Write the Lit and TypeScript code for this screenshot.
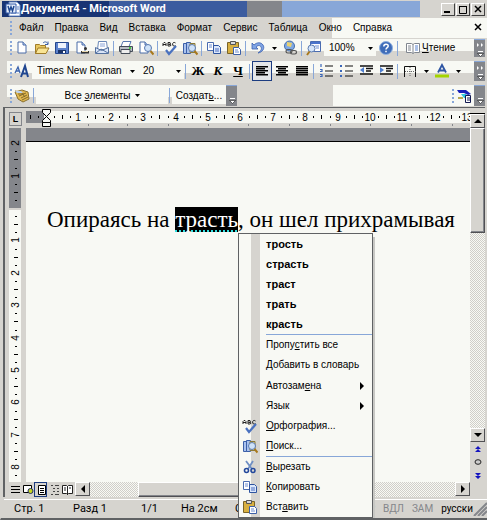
import { LitElement, html, svg, css, nothing } from "lit";
import { customElement } from "lit/decorators.js";
import { classMap } from "lit/directives/class-map.js";

/* 16x16 toolbar glyphs */
const sheet = (x: number, y: number) => svg`
  <path d=${`M${x} ${y}h5l3 3v8h-8z`} fill="#fff" stroke="#4a6ca8"/>
  <path d=${`M${x + 5} ${y}v3h3`} fill="#b8cdf0" stroke="#4a6ca8"/>`;
const lens = svg`<circle cx="10" cy="8" r="3.5" fill="#cfe2f8" stroke="#5a7ab0"/><path d="M12.5 11l3 3.500" stroke="#a8781c" stroke-width="2"/>`;
const spell = svg`
  <path d="M1 6V3.500l1-1h1l1 1V6M1 4.500h3M6 6V2.500h2l.5 1-.5.8H6.500h2l.5 1-1 .7H6M13.500 3l-.8-.5H11.500l-.8 1v1.500l.8 1h1.200l.8-.5" fill="none" stroke="#222"/>
  <path d="M4 10l3 4 7-8" fill="none" stroke="#4a72c0" stroke-width="2.200"/>`;
const research = svg`
  <path d="M1.500 3.500h3v10h-3zM4.500 2.500h4v11h-4z" fill="#a9c2ee" stroke="#3c60a8"/>
  <path d="M8 3.500h5v9H8z" fill="#f0d878" stroke="#8a7a3a"/>${lens}`;
const copy = svg`
  <path d="M1.500 2.500h6v8h-6z" fill="#fff" stroke="#4a6cb0"/><path d="M3 5h3M3 7h3" stroke="#6a8cd0"/>
  <path d="M7.500 5.500h5l2 2v6h-7z" fill="#dce8fb" stroke="#2e54a0"/><path d="M9 9h4M9 11h4" stroke="#4a6cc0"/>`;
const paste = svg`
  <path d="M1.500 2.500h11v11h-11z" fill="#d8b040" stroke="#7a6428"/><path d="M4.500 1.500h5v3h-5z" fill="#d8d8d8" stroke="#555"/>
  <path d="M7.500 7.500h5l2 2v5h-7z" fill="#fff" stroke="#3c60a8"/><path d="M9 10h3M9 12h4" stroke="#6a8cd0"/>`;
const rows = (a: number[][]) =>
  a.map(([x, y, w]) => svg`<rect x=${x} y=${y} width=${w} height="1.500"/>`);

const ICONS: Record<string, unknown> = {
  fresh: sheet(4, 2),
  open: svg`<path d="M1.500 4.500h4l1 1h5v8h-10z" fill="#e8c860" stroke="#a07c28"/><path d="M4 8h11l-3 5.500H1.500z" fill="#f8e494" stroke="#a07c28"/><path d="M9 3c2-2 4-1 5 1m0-2.500V4.500h-3" fill="none" stroke="#3c60a8"/>`,
  save: svg`<path d="M1.500 2.500h13v11h-13z" fill="#5c82cc" stroke="#24468c"/><path d="M4 3h8v5H4z" fill="#eef3fc"/><path d="M4 10h8v3H4z" fill="#1c3468"/><path d="M9 11h2v2H9z" fill="#fff"/>`,
  perm: svg`${sheet(3, 2)}<circle cx="11.500" cy="8.500" r="1.500" fill="#333"/><path d="M7 11h8v2.500H7z" fill="#333"/><path d="M8 11.500h6" stroke="#e8d8b0"/>`,
  mail: svg`<path d="M4.500 1.500h8l1 8h-10z" fill="#fff" stroke="#6a88b8"/><path d="M6 4h5M6 6h5" stroke="#8aa4d8"/><path d="M1.500 7.500l6 3 7-3v6h-13z" fill="#d8e4f8" stroke="#54719f"/><path d="M2 13l5-4 7 4" fill="none" stroke="#54719f"/>`,
  print: svg`<path d="M5 1.500h8l-2 5H3z" fill="#fff" stroke="#5878b0"/><path d="M1.500 6.500h13v5h-13z" fill="#b8bcc4" stroke="#444c58"/><path d="M3 9.500h9v4H3z" fill="#eee" stroke="#444c58"/><path d="M11 8h2" stroke="#4c4" stroke-width="2"/>`,
  preview: svg`${sheet(2, 2)}${lens}`,
  spell, research, copy, paste,
  undo: svg`<path d="M2 3v6h6L6 7c2-2 4-2 5 0s0 4-3 6c5-1 7-5 5-8s-6-3-9 0z" fill="#7fa4e4" stroke="#3a5fae" stroke-width=".8"/>`,
  link: svg`<circle cx="7.500" cy="6" r="5" fill="#7ea8e4" stroke="#466ea8"/><path d="M5 2l5 1-1 4-4-1z" fill="#e8d070"/><rect x="4" y="9.500" width="6" height="3.500" rx="1.700" fill="none" stroke="#555" stroke-width="1.200"/><rect x="8.500" y="10.500" width="6" height="3.500" rx="1.700" fill="none" stroke="#555" stroke-width="1.200"/>`,
  docmap: svg`<path d="M4.500 1.500h10v10h-10z" fill="#fff" stroke="#4a6cb0"/><path d="M5 3h9" stroke="#4a74cc" stroke-width="2"/><path d="M9 6h4M10 8h3" stroke="#6a8cd0"/><circle cx="5.500" cy="8.500" r="3.500" fill="#d6e6fa" stroke="#5a7ab0"/><path d="M3.500 11.500L1 15" stroke="#a8781c" stroke-width="2"/>`,
  help: svg`<circle cx="8" cy="8" r="6.500" fill="#3e6cb8" stroke="#8fb0e0"/><path d="M5.800 6.500c0-3 4.400-3 4.400-.5C10.200 7.700 8 7.500 8 9.500M8 10.800v1.500" fill="none" stroke="#fff" stroke-width="1.500"/>`,
  read: svg`<path d="M1.500 3.500h5l1.500 1 1.500-1h5v9h-5l-1.500 1-1.500-1h-5z" fill="#fff" stroke="#80868f"/><path d="M8 4.500v9M3 6h3M3 8h3M3 10h3" stroke="#80868f"/><path d="M10 6h3M10 8h3M10 10h3" stroke="#5a84d0"/>`,
  styles: svg`<path d="M1 10l3-6 2 6M2 8h3" fill="none" stroke="#3a62ac" stroke-width="1.300"/><path d="M7 14l4-11 3 11M8.500 10.500h5" fill="none" stroke="#1f4690" stroke-width="2"/>`,
  left: rows([[2, 3, 12], [2, 5, 9], [2, 7, 12], [2, 9, 9], [2, 11, 12]]),
  center: rows([[2, 3, 12], [4, 5, 8], [2, 7, 12], [4, 9, 8], [2, 11, 12]]),
  justify: rows([[2, 3, 12], [2, 5, 12], [2, 7, 12], [2, 9, 12], [2, 11, 12]]),
  numbers: svg`<path d="M3 1v3M2 6.500h2v2H2M2 11.500h2v2H2" fill="none" stroke="#3a66b8" stroke-width="1.200"/><path d="M7 3h8M7 8h8M7 13h8" stroke="#111"/>`,
  bullets: svg`<path d="M2 3h2M2 8h2M2 13h2" stroke="#3a66b8" stroke-width="2"/><path d="M7 3h8M7 8h8M7 13h8" stroke="#111"/>`,
  outdent: svg`<path d="M2 3h13M8 5.500h7M8 8h5M2 11h13" stroke="#111" stroke-width="1.500"/><path d="M6 4L2 7l4 3z" fill="#4f7fd0"/>`,
  indent: svg`<path d="M2 3h13M8 5.500h7M8 8h5M2 11h13" stroke="#111" stroke-width="1.500"/><path d="M2 4l4 3-4 3z" fill="#4f7fd0"/>`,
  borders: svg`<path d="M2.500 14V3.500h11V14" fill="none" stroke="#111"/><path d="M3 8.500h11M8 4v10" stroke="#666" stroke-dasharray="1 1"/>`,
  color: svg`<path d="M4 9.500L8 2l4 7.500M5.500 7.500h5" fill="none" stroke="#2f56a4" stroke-width="1.800"/><path d="M1 11.500h14v3H1z" fill="#a4d400"/>`,
  book: svg`<path d="M1 4l7-2 6 2 1 7-6 3-5-3z" fill="#e0b850" stroke="#8a7030"/><path d="M1 3l6 1 4 5M4 6h6M5 8l7-3M7 10l6-3M8 12l6-3" fill="none" stroke="#846a28"/><path d="M1 3h6l2 2H3z" fill="#bcd0ea"/>`,
  pen: svg`<path d="M1 2h9l5 4-3 1-4-2H3z" fill="#1820b8"/><path d="M5 6h5l3 4H8z" fill="#30c8e0"/><path d="M2 10h5" stroke="#a09020" stroke-width="1.500"/><path d="M9.500 7.500h5v7h-5z" fill="#fff" stroke="#111850"/><path d="M11 10h3M11 12h3" stroke="#111850"/>`,
  cut: svg`<path d="M4 2l6 8M11 2L6 10" stroke="#6f8fc4" stroke-width="1.800"/><circle cx="4.500" cy="11.500" r="2" fill="none" stroke="#23489c" stroke-width="1.600"/><circle cx="11" cy="11.500" r="2" fill="none" stroke="#23489c" stroke-width="1.600"/>`,
  vNormal: svg`<path d="M3 4.500h9M3 7.500h9M3 10.500h9" stroke="#000"/>`,
  vWeb: svg`<path d="M2.500 3.500h8v7h-8z" fill="#fff" stroke="#000"/><circle cx="9.500" cy="9" r="2.500" fill="#c8d820" stroke="#222c60"/>`,
  vPrint: svg`<path d="M4.500 3.500h7v9h-7z" fill="#fff" stroke="#000"/><path d="M6 6.500h4M6 8.500h4M6 10.500h4" stroke="#000"/>`,
  vOutline: svg`<path d="M4 3.500h2M8 3.500h4M6 6.500h2M10 6.500h2M6 9.500h2M10 9.500h2M4 12.500h2M8 12.500h4" stroke="#444"/>`,
  vRead: svg`<path d="M2.500 3.500h4l1 1 1-1h4v8h-4l-1 1-1-1h-4z" fill="#fff" stroke="#222"/><path d="M7.500 4v9M9 6h2M4 6h2M4 8h2" stroke="#222"/>`,
};

const icon = (name: string) =>
  html`<svg class="icon" viewBox="0 0 16 16" aria-hidden="true">${ICONS[name]}</svg>`;
const down = html`<svg class="arrow" viewBox="0 0 5 3" aria-hidden="true"><path d="M0 0h5L2.500 3z"/></svg>`;
const tri = (d: string) => html`<svg class="tri" viewBox="0 0 8 8" aria-hidden="true"><path d=${d}/></svg>`;
const grip = html`<span class="grip"></span>`;
const sep = html`<span class="sep"></span>`;
const tool = (name: string, label: string, on = false) =>
  html`<button class=${classMap({ tool: true, on })} aria-label=${label}>${icon(name)}</button>`;
const chevron = (open = true) => html`<button class="more" aria-label="Параметры панелей инструментов">
  <svg viewBox="0 0 10 18" width="10" height="18" aria-hidden="true">
    ${open ? svg`<path d="M2 3l2 2-2 2zM6 3l2 2-2 2z" fill="#fff"/>` : nothing}
    <path d="M3 11.500h5" stroke="#fff"/><path d="M2.500 13.500h6l-3 3z" fill="#fff" stroke="#000" stroke-width=".5"/>
  </svg></button>`;

/* length of one centimetre on both rulers */
const CM = 32.4;

function ticks(zero: number, from: number, to: number, vertical: boolean) {
  const out = [];
  for (let q = from * 4; q <= to * 4; q++) {
    const p = Math.round(zero + (q * CM) / 4);
    if (q === 0) continue;
    if (q % 4 === 0) {
      const n = Math.abs(q / 4);
      out.push(
        vertical
          ? svg`<text class="num" text-anchor="middle" transform=${`translate(10 ${p}) rotate(-90)`}>${n}</text>`
          : svg`<text class="num" text-anchor="middle" x=${p} y="10">${n}</text>`
      );
    } else {
      const len = q % 2 === 0 ? 4 : 2;
      out.push(
        vertical
          ? svg`<rect x=${7 - len / 2} y=${p} width=${len} height="1"/>`
          : svg`<rect x=${p} y=${6 - len / 2} width="1" height=${len}/>`
      );
    }
  }
  return out;
}

@customElement("app-root")
export class AppRoot extends LitElement {
  static styles = css`
    :host {
      --face: #d6d4cf;
      --paper: #f8f9f4;
      --shade: #84868b;
      --blue: #88a7d8;
      display: grid;
      grid-template-rows: auto auto auto auto auto 1fr auto;
      box-sizing: border-box;
      height: 100vh;
      min-height: 320px;
      overflow: hidden;
      background: var(--face);
      color: #000;
      font: 10px/12px "Liberation Sans", sans-serif;
      border-left: 1px solid var(--face);
      border-bottom: 2px solid #606264;
    }
    button, select {
      font: inherit;
      color: inherit;
      background: none;
      border: 0;
      padding: 0;
      margin: 0;
      white-space: nowrap;
    }
    u { text-underline-offset: 1px; }
    .icon { width: 16px; height: 16px; display: block; flex: none; }
    .arrow { width: 5px; height: 3px; display: block; }
    .tri { width: 8px; height: 8px; display: block; }

    .title {
      display: flex;
      align-items: center;
      height: 16px;
      margin: 1px 2px 1px 1px;
      padding-left: 3px;
      background: linear-gradient(90deg, #183474 0 107px, #3c5c9f 107px 245px, var(--shade) 245px 280px, var(--blue) 280px calc(100% - 65px), var(--face) 0);
      color: #fff;
    }
    .title h1 { flex: 1; margin: 0; font: bold 11px/16px Roboto, "Liberation Sans", sans-serif; white-space: nowrap; }
    .caps { display: flex; gap: 1px; }
    .cap {
      width: 14px;
      height: 13px;
      display: grid;
      place-items: center;
      background: var(--face);
      border: 1px solid;
      border-color: #fff #404040 #404040 #fff;
      color: #000;
      box-sizing: border-box;
    }

    .menubar {
      display: flex;
      align-items: center;
      height: 20px;
      padding: 0 5px 0 9px;
      gap: 11px;
      background: linear-gradient(90deg, transparent 331px, var(--paper) 0);
    }
    .menubar .grip { margin-right: -4px; }
    .menubar .end { margin-left: auto; }
    .grip { flex: none; width: 2px; height: 14px; background: repeating-linear-gradient(var(--blue) 0 2px, transparent 2px 4px); }
    .sep { flex: none; width: 4px; height: 15px; background: linear-gradient(90deg, transparent 1px, var(--blue) 1px 2px, transparent 2px); }

    .bar {
      display: flex;
      align-items: center;
      height: 18px;
      margin: 1px 2px 2px 6px;
      padding-left: 3px;
      background: linear-gradient(var(--paper) 12px, var(--face) 12px);
    }
    .bar.second { margin-top: 2px; height: 20px; }
    .bar.third { height: 21px; margin-top: 2px; margin-bottom: 1px; padding: 0; background: none; }
    .group { display: flex; align-items: center; height: 21px; padding-left: 3px; background: linear-gradient(var(--paper) 12px, var(--face) 12px); }
    .tool { flex: none; width: 20px; height: 18px; display: grid; place-items: center; }
    .tool.on { height: 20px; background: #e4e6e8; box-shadow: inset 0 0 0 1px #1c3c80; }
    .tool.slim { width: 12px; }
    .tool.text { font: bold 13px/16px "Liberation Serif", serif; }
    .more { flex: none; align-self: stretch; width: 11px; background: var(--shade); border-top: 1px solid var(--blue); display: grid; place-items: center; }
    .combo { position: relative; display: flex; align-items: center; height: 16px; background: var(--paper); }
    .combo select { appearance: none; width: 100%; height: 16px; padding: 0 12px 0 5px; }
    .combo .arrow { position: absolute; right: 3px; top: 7px; pointer-events: none; }
    .font { width: 106px; }
    .size { width: 46px; }
    .zoom { width: 52px; }
    .gap { flex: 1; }
    .read { display: flex; align-items: center; gap: 1px; padding-left: 5px; }
    .wide { background: var(--paper); height: 17px; text-align: center; }
    .all { width: 132px; display: flex; align-items: center; justify-content: center; gap: 4px; }
    .make { width: 54px; }
    .extra { flex: 1; margin-left: 96px; align-self: stretch; display: flex; align-items: center; justify-content: flex-end; background: var(--paper); }

    .work {
      display: grid;
      grid-template-columns: 21px minmax(0, 1fr) 15px;
      grid-template-rows: 19px minmax(0, 1fr) 15px;
      margin: 0 2px 0 2px;
      border-top: 1px solid #606264;
      border-left: 2px solid #606264;
      padding-top: 1px;
    }
    .tab { justify-self: center; align-self: center; width: 13px; height: 14px; background: var(--face); border: 1px solid var(--shade); box-sizing: border-box; display: grid; place-items: center; font: bold 9px/10px "Liberation Sans", sans-serif; }
    .hruler { width: 100%; height: 19px; display: block; overflow: hidden; }
    .vruler { width: 12px; height: 100%; display: block; margin-left: 4px; background: var(--paper); overflow: hidden; }
    .num { font: 10px "Liberation Sans", sans-serif; }
    .side { min-height: 0; overflow: hidden; }
    .page {
      background: var(--paper);
      border-top: 13px solid var(--shade);
      min-width: 0;
    }
    .sheet { border-top: 1px solid #000; padding: 65px 0 0 21px; white-space: nowrap; font: 23px/25px "Liberation Serif", serif; }
    .sheet p { margin: 0; }
    .word {
      position: relative;
      display: inline-block;
      height: 25px;
      color: #fff;
      background: repeating-linear-gradient(90deg, #30e0e0 0 2px, transparent 2px 4px) 0 100% / 100% 2px no-repeat, #000;
    }

    .context {
      position: absolute;
      z-index: 2;
      left: 100%;
      top: calc(100% + 1px);
      width: 133px;
      border: 1px solid #606264;
      background: linear-gradient(90deg, var(--paper) 12px, var(--face) 12px 21px, var(--paper) 21px);
      box-shadow: 3px 3px 0 -1px #c8c8c4;
      color: #000;
      font: 10px/12px "Liberation Sans", sans-serif;
    }
    .item { display: flex; align-items: center; width: 100%; height: 20px; padding-right: 6px; text-align: left; }
    .slot { width: 27px; padding-left: 3px; box-sizing: border-box; flex: none; }
    .item .tri { margin-left: auto; }
    .item.bold { font: bold 11px/14px "Liberation Sans", sans-serif; }
    .context hr { margin: 0 0 0 27px; border: 0; height: 1px; background: var(--blue); }
    .context hr.plain { background: none; }

    .vscroll { display: flex; flex-direction: column; grid-column: 3; grid-row: 1 / 4; background: var(--face); }
    .knob { flex: none; display: grid; place-items: center; width: 15px; height: 14px; box-sizing: border-box; background: var(--face); border: 1px solid; border-color: #fff #505054 #505054 #fff; }
    .split { height: 4px; background: var(--face); border-bottom: 1px solid #000; }
    .trough { flex: 1; background: repeating-conic-gradient(var(--paper) 0 25%, #d0cec9 0 50%) 0 0 / 2px 2px; display: flex; }
    .vscroll .trough { flex-direction: column; }
    .thumb { box-sizing: border-box; background: var(--face); border: 1px solid; border-color: #fff #505054 #505054 #fff; box-shadow: inset -1px -1px 0 var(--shade); }
    .vscroll .thumb { height: 35%; }
    .browse { display: flex; flex-direction: column; align-items: center; justify-content: space-around; height: 41px; margin-bottom: 14px; }
    .browse button { height: 13px; display: grid; place-items: center; }
    .nav { fill: #1414c0; }

    .hscroll { display: flex; grid-column: 1 / 3; background: var(--face); }
    .view { width: 13px; height: 15px; display: grid; place-items: center; }
    .view.on { box-shadow: inset 0 0 0 1px #1c3c80; }
    .views { display: flex; padding-left: 3px; width: 70px; box-sizing: border-box; }
    .hscroll .trough { padding-left: 48px; }
    .hscroll .thumb { width: 70%; }

    .status { display: flex; align-items: center; height: 19px; margin: 2px 0 0 3px; border-top: 1px solid #fff; box-sizing: border-box; font: 11px/14px Roboto, "Liberation Sans", sans-serif; white-space: nowrap; padding-left: 10px; }
    .c1 { width: 59px; } .c2 { width: 68px; } .c3 { width: 40px; } .c4 { width: 54px; }
    .off, .lang { font-size: 10px; }
    .off { color: var(--shade); margin-right: 8px; }
    .push { flex: 1; }
  `;

  private hRuler() {
    return html`<svg class="hruler" role="img" aria-label="Горизонтальная линейка">
      <rect width="100%" height="12" y="2" fill="#f8f9f4"/>
      <rect width="18" height="12" y="2" fill="#84868b"/>
      <g transform="translate(0 2)">${ticks(20, -0.5, 13, false)}</g>
      ${[62, 101, 142, 182, 222, 263, 304, 344, 385, 426].map((x) => svg`<rect x=${x} y="15" width="1" height="2" fill="#84868b"/>`)}
      <path d="M16.500 .5h8v3l-4 4 4 4v2h-8v-2l4-4-4-4zM16.500 13.500h8v4h-8z" fill="#f8f9f4" stroke="#000"/>
    </svg>`;
  }

  private vRuler() {
    return html`<svg class="vruler" role="img" aria-label="Вертикальная линейка">
      <rect width="12" height="80" fill="#84868b"/>
      <rect y="80" width="12" height="2" fill="#d6d4cf"/>
      ${ticks(80, -2, 8.5, true)}
    </svg>`;
  }

  private contextMenu() {
    const row = (label: unknown, ic = "", sub = false) => html`<button class="item" role="menuitem">
      <span class="slot">${ic ? icon(ic) : nothing}</span>${label}${sub ? tri("M2 0l4 4-4 4z") : nothing}</button>`;
    return html`<div class="context" role="menu">
      ${["трость", "страсть", "траст", "трать", "красть"].map(
        (w) => html`<button class="item bold" role="menuitem"><span class="slot"></span>${w}</button>`
      )}
      <hr>
      ${row(html`<span>Пропу<u>с</u>тить все</span>`)}
      ${row(html`<span><u>Д</u>обавить в словарь</span>`)}
      <hr class="plain">
      ${row(html`<span>Автозам<u>е</u>на</span>`, "", true)}
      ${row(html`<span>Язык</span>`, "", true)}
      ${row(html`<span><u>О</u>рфография...</span>`, "spell")}
      ${row(html`<span><u>П</u>оиск...</span>`, "research")}
      <hr>
      ${row(html`<span><u>В</u>ырезать</span>`, "cut")}
      ${row(html`<span><u>К</u>опировать</span>`, "copy")}
      ${row(html`<span>Вст<u>а</u>вить</span>`, "paste")}
    </div>`;
  }

  render() {
    return html`
      <header class="title">
        <svg class="icon" viewBox="0 0 16 16" aria-hidden="true">
          <path d="M4 1h8l3 3v11H4z" fill="#fff" stroke="#6a8cc8"/><path d="M12 6h2M12 8h2M6 12h8" stroke="#5a80c8"/>
          <path d="M1 3h10v9H1z" fill="#e4ecfa" stroke="#3058a8"/><path d="M3 5l1.500 5L6 6l1.500 4L9 5" fill="none" stroke="#204890" stroke-width="1.500"/>
        </svg>
        <h1>Документ4 - Microsoft Word</h1>
        <div class="caps">
          <button class="cap" aria-label="Свернуть"><svg width="8" height="8"><path d="M0 7h6" stroke="#000" stroke-width="2"/></svg></button>
          <button class="cap" aria-label="Развернуть"><svg width="10" height="9"><path d="M1 1.500h8M1.500 1v7.500h7V1" fill="none" stroke="#000"/></svg></button>
          <button class="cap" aria-label="Закрыть"><svg width="8" height="8"><path d="M1 1l6 6M7 1L1 7" stroke="#000" stroke-width="1.500"/></svg></button>
        </div>
      </header>

      <nav class="menubar">
        ${grip}
        ${["Файл", "Правка", "Вид", "Вставка", "Формат", "Сервис", "Таблица", "Окно", "Справка"].map((t) => html`<button>${t}</button>`)}
        <button class="end" aria-label="Закрыть документ"><svg width="8" height="8"><path d="M1 1l6 6M7 1L1 7" stroke="#000" stroke-width="1.500"/></svg></button>
      </nav>

      <div class="bar" role="toolbar">
        ${grip}
        ${tool("fresh", "Создать")}${tool("open", "Открыть")}${tool("save", "Сохранить")}${tool("perm", "Разрешения")}${tool("mail", "Сообщение")}${sep}
        ${tool("print", "Печать")}${tool("preview", "Просмотр")}${sep}
        ${tool("spell", "Правописание")}${tool("research", "Справочные материалы")}${sep}
        ${tool("copy", "Копировать")}${tool("paste", "Вставить")}${sep}
        ${tool("undo", "Отменить")}<button class="tool slim" aria-label="Список отмены">${down}</button>
        ${tool("link", "Гиперссылка")}${sep}
        ${tool("docmap", "Схема документа")}
        <label class="combo zoom"><select aria-label="Масштаб"><option>100%</option></select>${down}</label>
        ${tool("help", "Справка")}${sep}
        <button class="read">${icon("read")}<span><u>Ч</u>тение</span></button>
        <span class="gap"></span>${chevron()}
      </div>

      <div class="bar second" role="toolbar">
        ${grip}
        ${tool("styles", "Стили и форматирование")}
        <label class="combo font"><select aria-label="Шрифт"><option>Times New Roman</option></select>${down}</label>
        <label class="combo size"><select aria-label="Размер"><option>20</option></select>${down}</label>${sep}
        <button class="tool text">Ж</button><button class="tool text"><i>К</i></button><button class="tool text"><u>Ч</u></button>${sep}
        ${tool("left", "По левому краю", true)}${tool("center", "По центру")}${tool("justify", "По ширине")}${sep}
        ${tool("numbers", "Нумерация")}${tool("bullets", "Маркеры")}${tool("outdent", "Уменьшить отступ")}${tool("indent", "Увеличить отступ")}${sep}
        ${tool("borders", "Границы")}<button class="tool slim" aria-label="Вид границ">${down}</button>
        ${tool("color", "Цвет шрифта")}<button class="tool slim" aria-label="Выбор цвета">${down}</button>
        <span class="gap"></span>${chevron()}
      </div>

      <div class="bar third" role="toolbar">
        <div class="group">
          ${grip}
          ${tool("book", "Элементы автотекста")}${sep}
          <button class="wide all"><span>Все <u>э</u>лементы</span>${down}</button>${sep}
          <button class="wide make">Создат<u>ь</u>...</button>
        </div>
        ${chevron(false)}
        <div class="extra">${grip}${tool("pen", "Рецензирование")}</div>
        ${chevron(false)}
      </div>

      <main class="work">
        <button class="tab" aria-label="Позиция табуляции">L</button>
        ${this.hRuler()}
        <div class="vscroll">
          <div class="split"></div>
          <button class="knob" aria-label="Вверх">${tri("M0 6h8L4 2z")}</button>
          <div class="trough"><div class="thumb"></div></div>
          <button class="knob" aria-label="Вниз">${tri("M0 2h8L4 6z")}</button>
          <div class="browse">
            <button aria-label="Предыдущая страница"><svg class="nav" width="6" height="6"><path d="M0 3l3-3 3 3zM0 6l3-3 3 3z"/></svg></button>
            <button aria-label="Выбор объекта"><svg width="8" height="6"><ellipse cx="4" cy="3" rx="3" ry="2.300" fill="#ccc" stroke="#222"/></svg></button>
            <button aria-label="Следующая страница"><svg class="nav" width="6" height="6"><path d="M0 0l3 3 3-3zM0 3l3 3 3-3z"/></svg></button>
          </div>
        </div>
        <div class="side">${this.vRuler()}</div>
        <div class="page">
          <article class="sheet">
            <p>Опираясь на <span class="word">трасть${this.contextMenu()}</span>, он шел прихрамывая</p>
          </article>
        </div>
        <div class="hscroll">
          <div class="views">
            <button class="view" aria-label="Обычный режим">${icon("vNormal")}</button>
            <button class="view" aria-label="Веб-документ">${icon("vWeb")}</button>
            <button class="view on" aria-label="Разметка страницы">${icon("vPrint")}</button>
            <button class="view" aria-label="Структура">${icon("vOutline")}</button>
            <button class="view" aria-label="Режим чтения">${icon("vRead")}</button>
          </div>
          <button class="knob" aria-label="Влево">${tri("M6 0v8L2 4z")}</button>
          <div class="trough"><div class="thumb"></div></div>
          <button class="knob" aria-label="Вправо">${tri("M2 0v8l4-4z")}</button>
        </div>
      </main>

      <footer class="status">
        <span class="c1">Стр. 1</span><span class="c2">Разд 1</span><span class="c3">1/1</span><span class="c4">На 2см</span><span>Ст 1</span>
        <span class="push"></span>
        <span class="off">ИСПР</span><span class="off">ВДЛ</span><span class="off">ЗАМ</span><span class="lang">русски</span>
        <svg width="14" height="14" aria-hidden="true"><path d="M1 14L14 1M5 14l9-9M9 14l5-5" stroke="#84868b" stroke-width="2"/></svg>
      </footer>
    `;
  }
}
